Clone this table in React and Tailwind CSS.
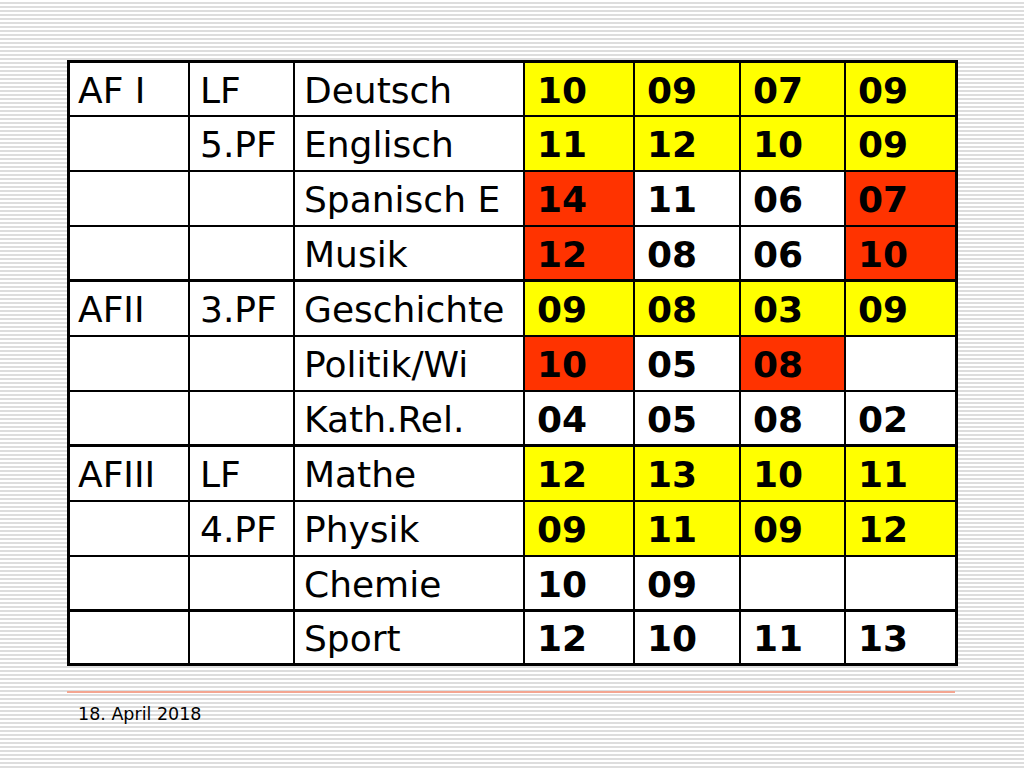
import React from "react";

const Y = "bg-[#ffff00]";
const R = "bg-[#ff3300]";
const W = "bg-white";

const rows = [
  { a: "AF I", b: "LF", c: "Deutsch", n: [["10", Y], ["09", Y], ["07", Y], ["09", Y]] },
  { a: "", b: "5.PF", c: "Englisch", n: [["11", Y], ["12", Y], ["10", Y], ["09", Y]] },
  { a: "", b: "", c: "Spanisch E", n: [["14", R], ["11", W], ["06", W], ["07", R]] },
  { a: "", b: "", c: "Musik", n: [["12", R], ["08", W], ["06", W], ["10", R]], thick: true },
  { a: "AFII", b: "3.PF", c: "Geschichte", n: [["09", Y], ["08", Y], ["03", Y], ["09", Y]] },
  { a: "", b: "", c: "Politik/Wi", n: [["10", R], ["05", W], ["08", R], ["", W]] },
  { a: "", b: "", c: "Kath.Rel.", n: [["04", W], ["05", W], ["08", W], ["02", W]], thick: true },
  { a: "AFIII", b: "LF", c: "Mathe", n: [["12", Y], ["13", Y], ["10", Y], ["11", Y]] },
  { a: "", b: "4.PF", c: "Physik", n: [["09", Y], ["11", Y], ["09", Y], ["12", Y]] },
  { a: "", b: "", c: "Chemie", n: [["10", W], ["09", W], ["", W], ["", W]], thick: true },
  { a: "", b: "", c: "Sport", n: [["12", W], ["10", W], ["11", W], ["13", W]], last: true },
];

export default function App() {
  return (
    <div
      className="w-[1024px] h-[768px] overflow-hidden bg-[repeating-linear-gradient(to_bottom,#ffffff_0px,#ffffff_2px,#dddddd_2px,#dddddd_4px)]"
      style={{ fontFamily: '"DejaVu Sans", Verdana, sans-serif' }}
    >
      <div className="pt-[60px] pl-[67px]">
        <div className="w-[891px] border-[3px] border-black bg-white grid grid-cols-[120px_105px_230px_110px_106px_105px_109px] text-[36px] text-black leading-none">
          {rows.map((r, i) => {
            const h = i === 0 ? "h-[54px]" : r.last ? "h-[51px]" : "h-[55px]";
            const bb = r.last ? "" : r.thick ? "border-b-[3px]" : "border-b-2";
            const base = `${h} ${bb} border-black flex items-center pt-[3px]`;
            return (
              <React.Fragment key={i}>
                <div className={`${base} border-r-2 pl-[8px] bg-white`}>{r.a}</div>
                <div className={`${base} border-r-2 pl-[10px] bg-white`}>{r.b}</div>
                <div className={`${base} border-r-2 pl-[9px] bg-white`}>{r.c}</div>
                {r.n.map(([v, bg], j) => (
                  <div
                    key={j}
                    className={`${base} ${j < 3 ? "border-r-2" : ""} pl-[12px] font-bold ${bg}`}
                  >
                    {v}
                  </div>
                ))}
              </React.Fragment>
            );
          })}
        </div>
        <div className="mt-[25px] w-[888px] h-[2px] bg-[#f4a590]"></div>
        <div className="mt-[13px] pl-[11px] text-[17.5px] leading-none text-black">18. April 2018</div>
      </div>
    </div>
  );
}
